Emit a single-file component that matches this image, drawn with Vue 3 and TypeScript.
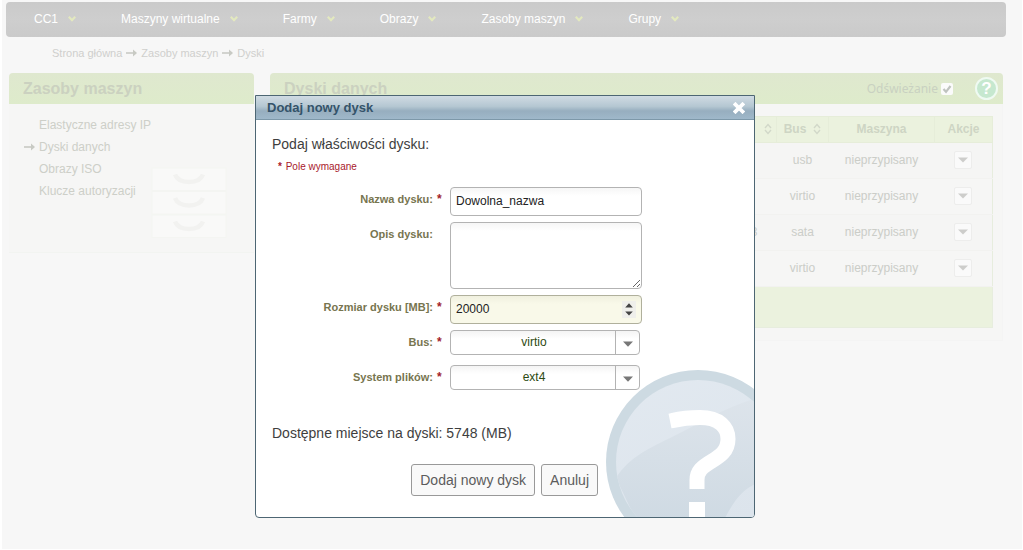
<script setup lang="ts">
import { ref } from 'vue'

interface DiskRow {
  size: string
  bus: string
  machine: string
}

const menu: string[] = ['CC1', 'Maszyny wirtualne', 'Farmy', 'Obrazy', 'Zasoby maszyn', 'Grupy']
const crumbs: string[] = ['Strona główna', 'Zasoby maszyn', 'Dyski']
const sections: string[] = ['Elastyczne adresy IP', 'Dyski danych', 'Obrazy ISO', 'Klucze autoryzacji']
const activeSection = 'Dyski danych'

const disks: DiskRow[] = [
  { size: '', bus: 'usb', machine: 'nieprzypisany' },
  { size: '', bus: 'virtio', machine: 'nieprzypisany' },
  { size: '3', bus: 'sata', machine: 'nieprzypisany' },
  { size: '', bus: 'virtio', machine: 'nieprzypisany' },
]

const refresh = ref(true)
const name = ref('Dowolna_nazwa')
const description = ref('')
const size = ref(20000)
const bus = ref('virtio')
const fileSystem = ref('ext4')
</script>

<template>
  <div class="page">
    <nav class="menu">
      <a v-for="item in menu" :key="item" href="#" class="menu-item">
        {{ item }}
        <svg class="chevron" viewBox="0 0 8 6" width="8" height="6">
          <path d="M0.8 0.8 L4 4.2 L7.2 0.8" fill="none" stroke="#e3e9bf" stroke-width="2.2" />
        </svg>
      </a>
    </nav>

    <div class="crumbs">
      <template v-for="(crumb, i) in crumbs" :key="crumb">
        <svg v-if="i > 0" class="arrow" viewBox="0 0 11 8" width="11" height="8">
          <path d="M0 4 H8" stroke="currentColor" stroke-width="1.6" />
          <path d="M7 0.6 L11 4 L7 7.4 Z" fill="currentColor" />
        </svg>
        <a href="#">{{ crumb }}</a>
      </template>
    </div>

    <div class="columns">
      <aside class="panel side">
        <div class="panel-head"><h2>Zasoby maszyn</h2></div>
        <div class="side-body">
          <ul>
            <li v-for="section in sections" :key="section">
              <svg v-if="section === activeSection" class="arrow" viewBox="0 0 11 8" width="11" height="8">
                <path d="M0 4 H8" stroke="currentColor" stroke-width="1.6" />
                <path d="M7 0.6 L11 4 L7 7.4 Z" fill="currentColor" />
              </svg>
              <span v-else class="arrow-space"></span>
              <a href="#">{{ section }}</a>
            </li>
          </ul>
          <svg class="drawers" viewBox="0 0 76 72" width="76" height="72">
            <g v-for="n in 3" :key="n">
              <rect x="1" :y="n * 23.5 - 22.5" width="74" height="22.5" fill="#f9f9f8" stroke="#f4f5f2" />
              <path
                :d="`M24 ${n * 23.5 - 16} q3 7.5 14 7.5 q11 0 14 -7.5`"
                fill="none"
                stroke="#f2f2f0"
                stroke-width="4.5"
              />
            </g>
          </svg>
        </div>
      </aside>

      <main class="panel main">
        <div class="panel-head">
          <h2>Dyski danych</h2>
          <label class="refresh">
            Odświeżanie
            <span class="check">
              <input v-model="refresh" type="checkbox" />
              <svg v-if="refresh" viewBox="0 0 12 12" width="12" height="12">
                <path d="M2.5 6 L5 8.8 L9.5 3" fill="none" stroke="#bfc3bf" stroke-width="2.2" />
              </svg>
            </span>
          </label>
          <button type="button" class="help">?</button>
        </div>
        <div class="main-body">
          <table>
            <colgroup>
              <col />
              <col class="c-bus" />
              <col class="c-machine" />
              <col class="c-actions" />
            </colgroup>
            <thead>
              <tr>
                <th class="sort-only">
                  <svg viewBox="0 0 8 12" width="8" height="12">
                    <path d="M1 5 L4 1.5 L7 5 M1 7 L4 10.5 L7 7" fill="none" stroke="#d2d8c9" stroke-width="1.4" />
                  </svg>
                </th>
                <th>
                  <span class="bus-head">
                    Bus
                    <svg viewBox="0 0 8 12" width="8" height="12">
                      <path d="M1 5 L4 1.5 L7 5 M1 7 L4 10.5 L7 7" fill="none" stroke="#d2d8c9" stroke-width="1.4" />
                    </svg>
                  </span>
                </th>
                <th>Maszyna</th>
                <th>Akcje</th>
              </tr>
            </thead>
            <tbody>
              <tr v-for="(disk, i) in disks" :key="i">
                <td class="size">{{ disk.size }}</td>
                <td>{{ disk.bus }}</td>
                <td>{{ disk.machine }}</td>
                <td>
                  <button type="button" class="action" aria-label="Akcje">
                    <svg viewBox="0 0 10 6" width="10" height="6"><path d="M0 0.5 H10 L5 5.5 Z" fill="#cdcdcb" /></svg>
                  </button>
                </td>
              </tr>
            </tbody>
            <tfoot>
              <tr><td colspan="4"></td></tr>
            </tfoot>
          </table>
        </div>
      </main>
    </div>

    <div class="overlay">
      <form class="dialog" role="dialog" aria-labelledby="dialog-title" @submit.prevent>
        <header class="dialog-head">
          <h1 id="dialog-title">Dodaj nowy dysk</h1>
          <button type="button" class="close" aria-label="Zamknij">
            <svg viewBox="0 0 12 12" width="12" height="12">
              <path d="M2.5 2.5 L9.5 9.5 M9.5 2.5 L2.5 9.5" stroke="#fff" stroke-width="3.8" stroke-linecap="square" />
            </svg>
          </button>
        </header>

        <svg class="watermark" viewBox="0 0 148 147" width="148" height="147">
          <defs>
            <linearGradient id="disc" x1="0" y1="0" x2="0.4" y2="1">
              <stop offset="0" stop-color="#e2e9f0" />
              <stop offset="1" stop-color="#dce4ec" />
            </linearGradient>
            <linearGradient id="shade" x1="0" y1="0" x2="0" y2="1">
              <stop offset="0" stop-color="#dde4eb" />
              <stop offset="1" stop-color="#cfdae3" />
            </linearGradient>
            <clipPath id="disc-clip"><circle cx="92" cy="92" r="82" /></clipPath>
          </defs>
          <circle cx="92" cy="92" r="92" fill="#cddae2" />
          <circle cx="92" cy="92" r="82" fill="url(#disc)" />
          <path
            d="M10 108 C24 86 44 78 68 66 C94 53 118 38 150 28 V114 C140 118 130 126 118 150 H30 Z"
            fill="url(#shade)"
            clip-path="url(#disc-clip)"
          />
          <path
            d="M64 51 L66 50.6 C75 48.5 84 47.5 94 47.5 C113 47.5 122 57 122 69 C122 81 114 86 106 91 C96 97 91 101 91 110 V119"
            fill="none"
            stroke="#fff"
            stroke-width="15"
          />
          <rect x="83" y="132" width="16" height="16" fill="#fff" />
        </svg>

        <div class="dialog-body">
          <p class="lead">Podaj właściwości dysku:</p>
          <p class="required"><b>*</b> Pole wymagane</p>

          <div class="row">
            <label for="disk-name">Nazwa dysku:<b>*</b></label>
            <input id="disk-name" v-model="name" class="field" type="text" />
          </div>
          <div class="row">
            <label for="disk-description">Opis dysku:<b></b></label>
            <textarea id="disk-description" v-model="description" class="field"></textarea>
          </div>
          <div class="row">
            <label for="disk-size">Rozmiar dysku [MB]:<b>*</b></label>
            <span class="wrap">
              <input id="disk-size" v-model="size" class="field number" type="number" />
              <svg class="stepper" viewBox="0 0 14 17" width="14" height="17">
                <rect width="14" height="17" fill="#efefeb" />
                <path d="M3.2 6.5 L7 2.2 L10.8 6.5 Z M3.2 10.5 L7 14.6 L10.8 10.5 Z" fill="#444" />
              </svg>
            </span>
          </div>
          <div class="row row-select">
            <label for="disk-bus">Bus:<b>*</b></label>
            <span class="wrap select">
              <select id="disk-bus" v-model="bus">
                <option>virtio</option>
                <option>usb</option>
                <option>sata</option>
              </select>
              <span class="drop">
                <svg viewBox="0 0 10 6" width="10" height="6"><path d="M0 0.5 H10 L5 5.8 Z" fill="#777" /></svg>
              </span>
            </span>
          </div>
          <div class="row row-select">
            <label for="disk-fs">System plików:<b>*</b></label>
            <span class="wrap select">
              <select id="disk-fs" v-model="fileSystem">
                <option>ext4</option>
              </select>
              <span class="drop">
                <svg viewBox="0 0 10 6" width="10" height="6"><path d="M0 0.5 H10 L5 5.8 Z" fill="#777" /></svg>
              </span>
            </span>
          </div>

          <p class="free">Dostępne miejsce na dyski: 5748 (MB)</p>
          <div class="buttons">
            <button type="submit">Dodaj nowy dysk</button>
            <button type="button">Anuluj</button>
          </div>
        </div>
      </form>
    </div>
  </div>
</template>

<style>
body {
  margin: 0;
  background: #fff;
}
</style>

<style scoped>
* {
  box-sizing: border-box;
}

.page {
  min-height: calc(100vh - 1px);
  margin: 0 1px 1px 2px;
  padding: 2px 16px 0 4px;
  background: #f7f7f7;
  font-family: 'Liberation Sans', Arial, sans-serif;
  font-size: 12px;
  color: #cbcdc8;
}

a {
  color: inherit;
  text-decoration: none;
}

h1,
h2,
p,
ul {
  margin: 0;
  padding: 0;
}

button,
input,
select,
textarea {
  margin: 0;
  font-family: inherit;
}

.menu {
  display: flex;
  gap: 45px;
  height: 35px;
  padding: 0 28px 2px;
  border-radius: 4px;
  background: linear-gradient(#cacaca, #cecece 50%, #cacaca);
}

.menu-item {
  display: flex;
  align-items: center;
  gap: 10px;
  color: #fff;
  white-space: nowrap;
}

.crumbs {
  display: flex;
  align-items: center;
  gap: 4px;
  height: 34px;
  padding: 0 0 2px 46px;
  font-size: 11px;
  color: #cfcfcd;
}

.arrow {
  flex: none;
  color: #c8cac4;
}

.columns {
  display: flex;
  align-items: flex-start;
  gap: 16px;
  margin: 2px 3px 0;
}

.side {
  flex: 0 0 244px;
}

.main {
  flex: 1;
}

.panel {
  border-radius: 4px 4px 0 0;
  background: #f6f6f5;
}

.panel-head {
  display: flex;
  align-items: center;
  height: 31px;
  padding: 0 5px 0 14px;
  border-radius: 4px 4px 0 0;
  background: linear-gradient(#dfe8cf, #deebcb);
}

h2 {
  flex: 1;
  font-size: 16px;
  font-weight: bold;
  line-height: 20px;
  color: #cbd1c0;
}

.side-body {
  display: flex;
  justify-content: space-between;
  padding: 10px 27px 13px 15px;
  border-bottom: 1px solid #f2f4f1;
}

ul {
  list-style: none;
}

li {
  display: flex;
  align-items: center;
  gap: 4px;
  height: 22px;
  white-space: nowrap;
  color: #cdcfc8;
}

.arrow-space {
  width: 11px;
}

.drawers {
  flex: none;
  margin-top: 53px;
}

.refresh {
  display: flex;
  align-items: center;
  gap: 3px;
  margin-right: 22px;
  font-family: 'Noto Sans', sans-serif;
  color: #c9d1c1;
}

.check {
  display: grid;
}

.check > * {
  grid-area: 1 / 1;
}

.check input {
  width: 12px;
  height: 12px;
  appearance: none;
  border-radius: 2px;
  background: #fbfbfb;
}

.check svg {
  pointer-events: none;
}

.help {
  width: 23px;
  height: 23px;
  padding: 0;
  border: 2px solid #effaf2;
  border-radius: 50%;
  background: #c6e8cf;
  font-size: 17px;
  font-weight: bold;
  line-height: 19px;
  color: #fff;
}

.main-body {
  padding: 12px 9px;
  border-right: 1px solid #f4f4f4;
  border-bottom: 1px solid #f4f4f4;
}

table {
  width: 100%;
  table-layout: fixed;
  border-collapse: collapse;
  border: 1px solid #e7edde;
  text-align: center;
}

.c-bus {
  width: 52px;
}

.c-machine {
  width: 106px;
}

.c-actions {
  width: 58px;
}

th,
td {
  padding: 0;
}

th {
  height: 26px;
  padding-bottom: 2px;
  border: 1px solid #e6edd9;
  background: #ebf2de;
  color: #ced5c4;
}

.sort-only {
  padding-right: 4px;
  text-align: right;
}

.sort-only svg {
  vertical-align: middle;
}

.bus-head {
  display: flex;
  align-items: center;
  justify-content: center;
  gap: 7px;
}

tbody td {
  height: 36px;
  padding-bottom: 2px;
  border-bottom: 1px solid #f2f2f0;
  background: #f6f6f5;
}

tbody tr:nth-child(odd) td {
  background: #f5f5f4;
}

.size {
  padding-right: 19px;
  text-align: right;
}

tfoot td {
  height: 41px;
  background: #ebf2de;
}

.action {
  display: inline-flex;
  align-items: center;
  justify-content: center;
  width: 18px;
  height: 18px;
  padding: 0;
  border: 1px solid #ededec;
  border-radius: 2px;
  background: #fafafa;
  vertical-align: middle;
}

.overlay {
  position: absolute;
  inset: 0;
  display: flex;
  align-items: flex-start;
  justify-content: center;
  padding: 95px 13px 0 0;
}

.dialog {
  position: relative;
  width: 500px;
  overflow: hidden;
  border: 1px solid #4d6673;
  border-radius: 0 0 4px 4px;
  background: #fff;
  color: #3e3e3e;
}

.dialog-head {
  display: flex;
  align-items: center;
  justify-content: space-between;
  height: 24px;
  padding: 0 9px 0 11px;
  border-bottom: 1px solid #7d98a9;
  background: linear-gradient(#d0dbe3, #b5c7d2 45%, #97aebf 65%, #9fb8ca);
}

h1 {
  font-size: 13px;
  font-weight: bold;
  line-height: 16px;
  color: #34536a;
}

.close {
  display: flex;
  padding: 0;
  border: 0;
  background: none;
}

.watermark {
  position: absolute;
  right: 0;
  bottom: 0;
}

.dialog-body {
  position: relative;
  padding: 16px 16px 21px;
}

.lead,
.free {
  font-size: 14px;
  line-height: 16px;
}

.required {
  margin: 8px 0 14px 6px;
  font-size: 10px;
  line-height: 13px;
  color: #a8202c;
}

.required b {
  margin-right: 1px;
}

.row {
  display: grid;
  grid-template-columns: 170px 192px;
  column-gap: 8px;
  align-items: start;
  margin-bottom: 6px;
}

.row-select {
  margin-bottom: 10px;
}

.row label {
  display: flex;
  justify-content: flex-end;
  font-size: 11px;
  font-weight: bold;
  line-height: 25px;
  color: #77754f;
}

.row label b {
  width: 9px;
  padding-left: 4px;
  font-size: 12px;
  color: #a31e2b;
}

.field {
  display: block;
  width: 100%;
  height: 29px;
  padding: 0 5px 2px;
  border: 1px solid #b3b3b3;
  border-radius: 4px;
  outline: 0;
  background: linear-gradient(#f6f6f6, #fff 8px);
  font-size: 12px;
  color: #222;
}

textarea.field {
  height: 67px;
  resize: both;
}

.wrap {
  display: block;
  position: relative;
}

.number {
  border-color: #b0b09c;
  background: linear-gradient(#f0f0df, #f9f9e9 8px);
  appearance: textfield;
}

.number::-webkit-inner-spin-button {
  appearance: none;
}

.stepper {
  position: absolute;
  top: 6px;
  right: 6px;
  pointer-events: none;
}

.select {
  width: 190px;
}

select {
  display: block;
  width: 100%;
  height: 25px;
  padding: 0 22px 2px 0;
  border: 1px solid #b3b3b3;
  border-radius: 4px;
  appearance: none;
  background: linear-gradient(#f4f4f4, #fff 8px);
  font-size: 12px;
  text-align: center;
  text-align-last: center;
  color: #2d4a12;
}

.drop {
  position: absolute;
  top: 1px;
  right: 1px;
  bottom: 1px;
  display: flex;
  align-items: center;
  justify-content: center;
  width: 24px;
  padding-top: 3px;
  border-left: 1px solid #b3b3b3;
  pointer-events: none;
}

.free {
  margin-top: 35px;
}

.buttons {
  display: flex;
  justify-content: flex-end;
  gap: 6px;
  margin-top: 23px;
  padding-right: 140px;
}

.buttons button {
  height: 32px;
  padding: 0 8px;
  border: 1px solid #999;
  border-radius: 3px;
  background: #f9f9f9;
  font-size: 14px;
  color: #5c5c5c;
}
</style>
